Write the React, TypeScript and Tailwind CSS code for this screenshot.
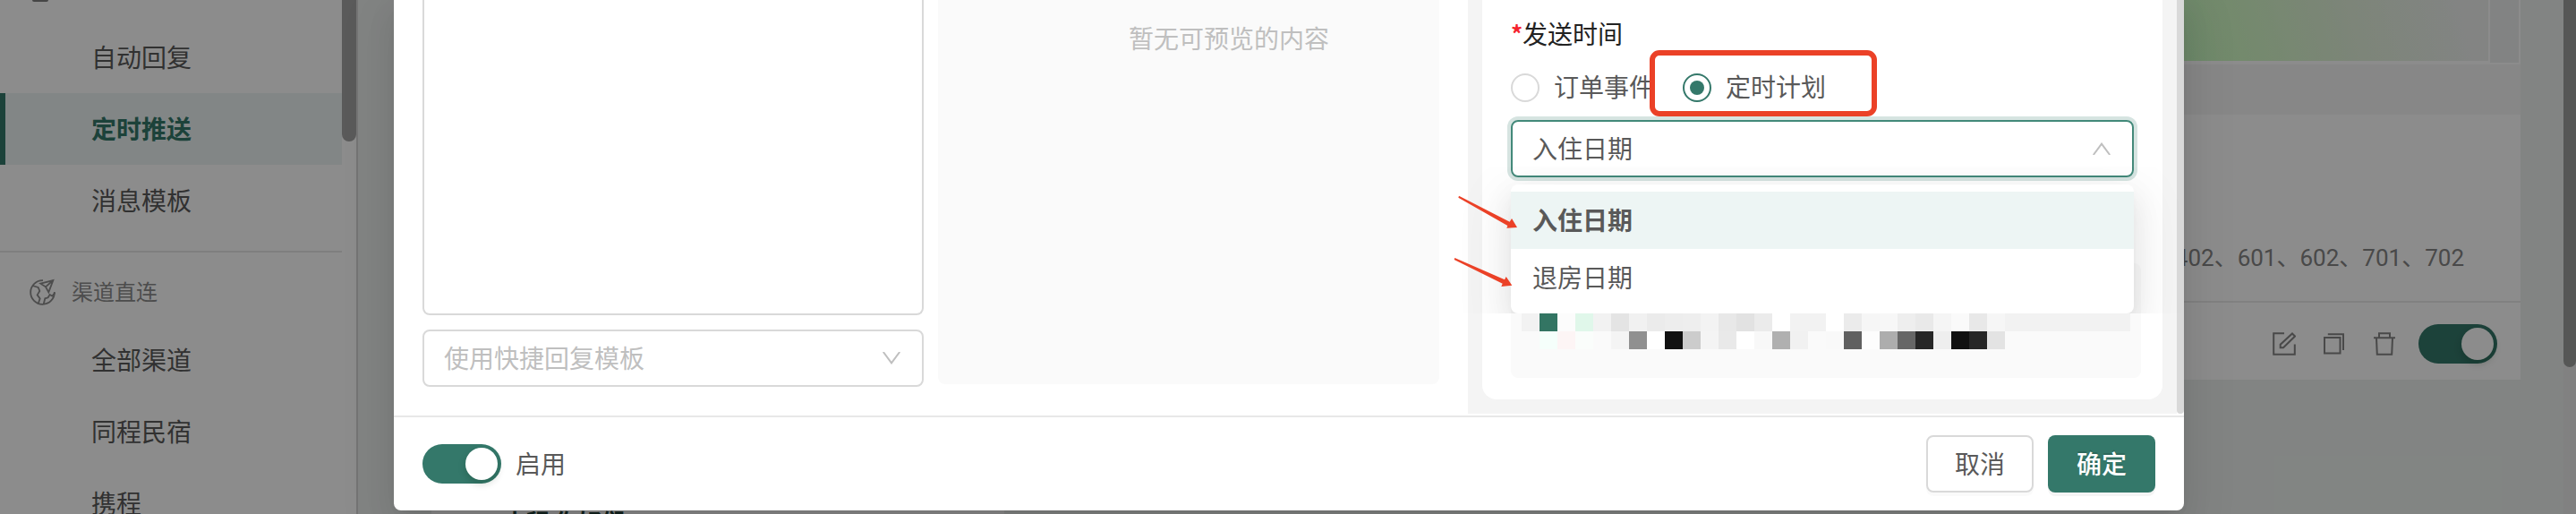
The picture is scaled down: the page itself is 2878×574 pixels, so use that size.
import React from 'react';

const messageItems = [
  { label: '自动回复', active: false },
  { label: '定时推送', active: true },
  { label: '消息模板', active: false }
];

const channelItems = ['全部渠道', '同程民宿', '携程'];

// Masked preview rows, one colour per 20px block
const maskRows = [
  [
    '#f2f2f2', '#337563', '#fcfcfc', '#e0f7ea', '#f2f2f2', '#e4e4e4', '#f1f1f1', '#ebebeb', '#ededed', '#eeeeee',
    '#f3f3f3', '#e8e8e8', '#e2e2e2', '#ebebeb', '#ffffff', '#f2f2f2', '#f2f2f2', '#ffffff', '#ebebeb', '#f6f6f6',
    '#f7f7f7', '#eeeeee', '#e9e9e9', '#f5f5f5', '#fafafa', '#e8e8e8', '#f6f6f6', '#f2f2f2', '#f2f2f2', '#f2f2f2',
    '#f2f2f2', '#f2f2f2', '#f2f2f2', '#f2f2f2'
  ],
  [
    '#fafafa', '#f5fffb', '#fdf5f5', '#fafdfb', '#fafafa', '#f4f4f4', '#909090', '#ffffff', '#111111', '#cccccc',
    '#f4f4f4', '#e9e9e9', '#ffffff', '#f8f8f8', '#b0b0b0', '#f1f1f1', '#fafafa', '#f9f9f9', '#606060', '#fdfdfd',
    '#adadad', '#666666', '#262626', '#eeeeee', '#111111', '#262626', '#e3e3e3'
  ]
];

const Switch: React.FC = () => (
  <div className="flex h-11 w-[88px] items-center justify-end rounded-full bg-[#34786a] p-1">
    <div className="h-9 w-9 rounded-full bg-white shadow-[0_4px_8px_rgba(0,35,11,0.2)]" />
  </div>
);

const Chevron: React.FC<{ up?: boolean }> = ({ up }) => (
  <svg width="20" height="14" viewBox="0 0 20 14" fill="none" stroke="#bfbfbf" strokeWidth="2">
    <path d={up ? 'M0.8 14 L10 1.6 L19.2 14' : 'M0.8 0 L10 12.4 L19.2 0'} />
  </svg>
);

const GlobeIcon: React.FC = () => (
  <svg width="30" height="30" viewBox="100 110 90 90" fill="none" stroke="#8c8c8c" strokeWidth="5.5">
    <path d="M145 116.500A40 40 0 1 0 183.500 155" />
    <path d="M110 134L129 140L134 152L126 165L135 177L129 195" />
    <path d="M147 196L152 177L162 174L168 164L176 169L185 158" />
    <path d="M137 127L179 116L164 156L154 138ZM154 138L179 116" />
  </svg>
);

const Sidebar: React.FC = () => (
  <aside className="flex h-full w-[400px] shrink-0 border-r-2 border-[#d3d3d3] bg-white">
    <div className="w-[382px] shrink-0 text-[28px] text-[#595959]">
      <div className="flex h-6 items-start pl-9">
        <div className="h-0.5 w-[18px] rounded-b-full bg-[#808080]" />
      </div>
      {messageItems.map(item => (
        <div
          key={item.label}
          className={
            item.active
              ? 'flex h-20 items-center border-l-[6px] border-[#34786a] bg-[#edf5f4] pb-[3px] pl-[96px] font-bold text-[#34786a]'
              : 'flex h-20 items-center pb-[3px] pl-[102px]'
          }
        >
          {item.label}
        </div>
      ))}
      <div className="mt-4 border-t-2 border-[#e8e8e8]" />
      <div className="flex h-20 items-center gap-[17px] pt-2 pl-[33px] text-2xl text-[#8c8c8c]">
        <GlobeIcon />
        <span className="pb-0.5">渠道直连</span>
      </div>
      {channelItems.map(label => (
        <div key={label} className="flex h-20 items-center pb-[3px] pl-[102px]">{label}</div>
      ))}
    </div>
    <div className="h-[158px] w-4 rounded-b-full bg-[#a5a5a5]" />
  </aside>
);

const CardActions: React.FC = () => (
  <div className="flex h-[86px] items-center justify-end pt-1.5 pr-[26px]">
    <svg className="mr-[31px]" width="26" height="26" viewBox="0 0 26 26" fill="none" stroke="#858585" strokeWidth="2">
      <path d="M13 1.200H1.200V24.800H24.800V13.500" />
      <path d="M22 1.500L25 4.500L12 17.300H8.700V13.800Z" />
    </svg>
    <svg className="mr-[33px]" width="23" height="24" viewBox="0 0 23 24" fill="none" stroke="#858585" strokeWidth="2">
      <path d="M1 5H18.500V22.500H1Z" />
      <path d="M4.800 1.200H22V19" />
    </svg>
    <svg className="mr-[26px]" width="24" height="26" viewBox="0 0 24 26" fill="none" stroke="#858585" strokeWidth="2">
      <path d="M0 6.200H24M6 6V1.200H18V6" />
      <path d="M3 6.500L3.800 24.800H20.200L21 6.500" />
    </svg>
    <Switch />
  </div>
);

const PageContent: React.FC = () => (
  <main className="flex h-full flex-1 items-start bg-[#edf1ef] pl-[82px]">
    <div className="h-full w-[640px] shrink-0 overflow-hidden bg-white pt-[566px] pl-[80px] text-[26px] leading-[32px] font-bold whitespace-nowrap text-[#1f3f37]">
      小程 你好们
    </div>
    {/* Push plan card */}
    <div className="flex h-[424px] flex-1 flex-col bg-white">
      <div className="flex h-[70px] justify-end gap-0.5 pr-0.5">
        <div className="mb-0.5 w-[400px] bg-[linear-gradient(75deg,#c4fac0_10%,#d3fbc6_30%,#e3f2dc_62%,#eef1ef_92%)]" />
        <div className="w-8 bg-[#edefee]" />
      </div>
      <div className="mt-0.5 h-14 bg-[#f6f6f6]" />
      <div className="flex flex-1 items-end justify-end border-b-2 border-[#ececec] pr-[63px] pb-[29px] font-[Roboto,'Noto_Sans_CJK_SC',sans-serif] text-[26px] leading-[38px] text-[#858585]">
        401、402、601、602、701、702
      </div>
      <CardActions />
    </div>
    <div className="h-full w-[48px] shrink-0" />
    <div className="h-full w-[14px] shrink-0 bg-[#ebecec]">
      <div className="h-[410px] rounded-b-full bg-[#9d9f9d]" />
    </div>
  </main>
);

const SendTimeForm: React.FC = () => (
  <div className="h-[462px] w-[792px] shrink-0 bg-[#f4f4f4] px-4">
    <div className="flex h-[446px] flex-col rounded-b-2xl bg-white px-8 pt-4 text-[28px] text-[#595959]">
      <div className="flex h-11 items-center pb-[3px] text-[#222222]">
        <span className="w-[13px] text-[26px] font-bold text-[#f5222d]">*</span>
        发送时间
      </div>
      <div className="mt-4 flex h-11 items-center">
        <span className="h-8 w-8 rounded-full border-2 border-[#d9d9d9]" />
        <span className="ml-4 w-[144px] pb-[5px]">订单事件</span>
        <span className="flex h-8 w-8 items-center justify-center rounded-full border-2 border-[#34786a]">
          <span className="h-4 w-4 rounded-full bg-[#34786a]" />
        </span>
        <span className="ml-4 pb-[5px]">定时计划</span>
      </div>
      <div className="mt-3.5 flex h-16 w-[696px] shrink-0 items-center justify-between rounded-lg border-2 border-[#43897a] pr-6 pl-[22px] shadow-[0_0_0_4px_#d6e4e1]">
        <span className="pb-[3px]">入住日期</span>
        <Chevron up />
      </div>
      {/* Masked preview */}
      <div className="mt-[96px] -mr-2 h-32 shrink-0 rounded-lg bg-[#fafafa] pt-14 pl-3">
        {maskRows.map((row, r) => (
          <div key={r} className="flex h-5">
            {row.map((color, i) => (
              <div key={i} className="h-5 w-5" style={{ backgroundColor: color }} />
            ))}
          </div>
        ))}
      </div>
    </div>
  </div>
);

const PushModal: React.FC = () => (
  <div className="absolute top-0 left-[440px] flex h-[570px] w-[2000px] flex-col rounded-b-lg bg-white text-[28px] text-[#595959] shadow-[0_12px_32px_rgba(0,0,0,0.08),0_6px_12px_-8px_rgba(0,0,0,0.12),0_18px_56px_16px_rgba(0,0,0,0.05)]">
    <div className="flex h-[464px]">
      <div className="ml-8 flex w-[560px] shrink-0 flex-col gap-4">
        <div className="h-[352px] rounded-b-lg border-2 border-t-0 border-[#d9d9d9]" />
        <div className="flex h-16 items-center justify-between rounded-lg border-2 border-[#d9d9d9] pr-6 pl-[22px] text-[#bfbfbf]">
          <span className="pb-[3px]">使用快捷回复模板</span>
          <Chevron />
        </div>
      </div>
      <div className="mr-8 ml-4 h-[429px] w-[560px] shrink-0 rounded-b-lg bg-[#fafafa] pt-[21px] pl-[213px] leading-[42px] text-[#bfbfbf]">
        暂无可预览的内容
      </div>
      <SendTimeForm />
      <div className="h-[462px] w-2 rounded-b bg-[#d9d9d9]" />
    </div>
    <div className="flex h-[106px] items-center border-t-2 border-[#e8e8e8] px-8">
      <Switch />
      <span className="ml-4 flex-1 pb-0.5">启用</span>
      <button className="h-16 w-[120px] rounded-lg border-2 border-[#d9d9d9] bg-white pb-0.5 shadow-[0_4px_0_rgba(0,0,0,0.02)]">
        取消
      </button>
      <button className="ml-4 h-16 w-[120px] rounded-lg bg-[#34786a] pb-0.5 font-medium text-white shadow-[0_4px_0_rgba(0,0,0,0.045)] [text-shadow:0_-2px_0_rgba(0,0,0,0.12)]">
        确定
      </button>
    </div>
  </div>
);

const DateDropdown: React.FC = () => (
  <div className="absolute top-[206px] left-[1688px] h-36 w-[696px] rounded-lg bg-white py-2 text-[28px] text-[#595959] [clip-path:inset(-20px_-60px_0_-60px)] shadow-[0_12px_32px_rgba(0,0,0,0.08),0_6px_12px_-8px_rgba(0,0,0,0.12),0_18px_56px_16px_rgba(0,0,0,0.05)]">
    <div className="flex h-16 items-center bg-[#edf5f4] pb-[3px] pl-6 font-bold">入住日期</div>
    <div className="flex h-16 items-center pb-[3px] pl-6">退房日期</div>
  </div>
);

const Annotations: React.FC = () => (
  <>
    <div className="absolute top-[56px] left-[1843px] h-[74px] w-[254px] rounded-[11px] border-[6px] border-[#eb4127]" />
    <svg className="absolute top-[190px] left-[1620px]" width="80" height="140" viewBox="0 0 240 420" fill="#eb4127">
      <path d="M30 86L200 173L207 162L225 192L190 194L193 186L28 92Z" />
      <path d="M16 294L183 367L188 357L208 386L172 390L176 380L14 300Z" />
    </svg>
  </>
);

const App: React.FC = () => {
  return (
    <div className="relative h-[574px] w-[2878px] overflow-hidden font-['Noto_Sans_CJK_SC',sans-serif]">
      <div className="flex h-full">
        <Sidebar />
        <PageContent />
      </div>
      <div className="absolute inset-0 bg-black/45" />
      <PushModal />
      <DateDropdown />
      <Annotations />
    </div>
  );
};

export default App;
